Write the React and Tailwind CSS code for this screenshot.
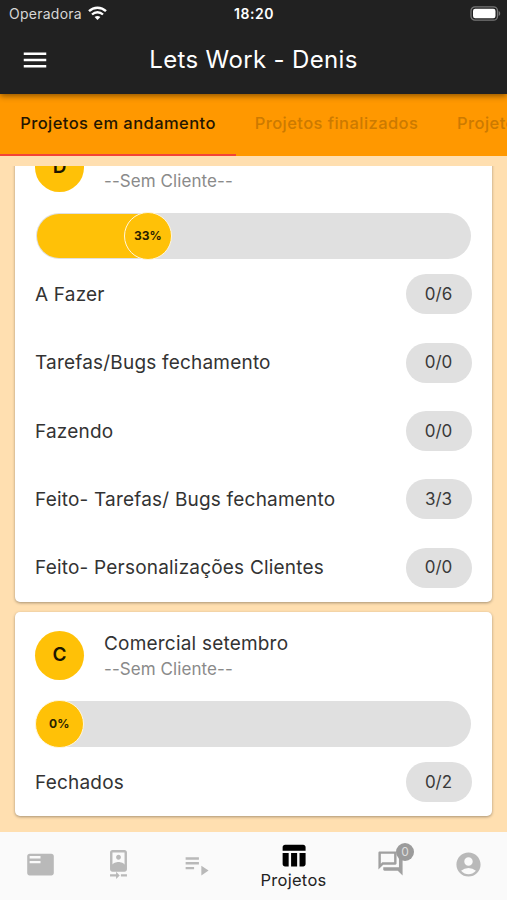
import {
  MdAccountCircle,
  MdCameraFront,
  MdFeaturedPlayList,
  MdMenu,
  MdOutlineQuestionAnswer,
  MdPlaylistPlay,
  MdTableChart,
} from "react-icons/md";

const projects = [
  {
    initial: "D",
    name: "Desenvolvimento",
    client: "--Sem Cliente--",
    percent: 33,
    lists: [
      { name: "A Fazer", count: "0/6" },
      { name: "Tarefas/Bugs fechamento", count: "0/0" },
      { name: "Fazendo", count: "0/0" },
      { name: "Feito- Tarefas/ Bugs fechamento", count: "3/3" },
      { name: "Feito- Personalizações Clientes", count: "0/0" },
    ],
  },
  {
    initial: "C",
    name: "Comercial setembro",
    client: "--Sem Cliente--",
    percent: 0,
    lists: [{ name: "Fechados", count: "0/2" }],
  },
];

function StatusBar() {
  return (
    <div className="grid grid-cols-3 items-center h-[28px] pl-[9px] pr-[6px]">
      <div className="flex items-center gap-[6px] -mt-[1px]">
        <span className="text-[14px] tracking-[0.25px] text-[#d6d6d6]">Operadora</span>
        <svg className="-mt-[1px]" width="19" height="15" viewBox="0 0 19 15" fill="none" stroke="#fff">
          <path d="M1 5.2C5.8.6 13.2.6 18 5.2" strokeWidth="2.4" />
          <path d="M4 8.5c3.2-3 7.8-3 11 0" strokeWidth="2.3" />
          <path d="M6.6 11c1.7-1.5 4.1-1.5 5.8 0l-2.9 3z" fill="#fff" stroke="none" />
        </svg>
      </div>
      <span className="text-center text-[14px] font-semibold tracking-[0.5px] pr-[2px] -mt-[2px]">18:20</span>
      <svg className="justify-self-end -mt-[2px]" width="31" height="15" viewBox="0 0 31 15">
        <rect x="1" y=".8" width="26.5" height="13.4" rx="4" fill="none" stroke="#777" strokeWidth="1.3" />
        <rect x="3" y="2.8" width="22.5" height="9.4" rx="2.2" fill="#fff" />
        <path d="M28.7 5c2 .7 2 4.3 0 5z" fill="#777" />
      </svg>
    </div>
  );
}

function Header() {
  return (
    <header className="relative z-10 shrink-0 h-[94px] bg-[#212121] text-white shadow-[0_2px_6px_rgba(0,0,0,0.45)]">
      <StatusBar />
      <div className="grid grid-cols-[60px_1fr_60px] items-center h-[64px]">
        <button className="pl-[20px]">
          <MdMenu className="size-[30px]" />
        </button>
        <h1 className="text-center text-[24px] leading-none tracking-[0.35px]">Lets Work - Denis</h1>
      </div>
    </header>
  );
}

function Tabs() {
  return (
    <nav className="flex shrink-0 h-[62px] bg-[#ff9800] text-[16.5px] font-medium tracking-[0.44px] whitespace-nowrap overflow-hidden">
      <button className="shrink-0 w-[236px] pb-[1px] border-b-[2.5px] border-[#f44336] text-[#241500]">
        Projetos em andamento
      </button>
      <button className="shrink-0 w-[201px] pb-[3px] text-[#cc7a00]">Projetos finalizados</button>
      <button className="shrink-0 pl-[20px] pb-[3px] text-[#cc7a00]">Projetos arquivados</button>
    </nav>
  );
}

function Progress({ percent }) {
  return (
    <div className="relative h-[46.5px] mx-[1px] rounded-full bg-[#e0e0e0]">
      {percent > 0 && (
        <div
          className="absolute left-[0.5px] inset-y-[1px] rounded-l-full bg-[#ffc107]"
          style={{ width: `calc(${percent}% - 33px)` }}
        />
      )}
      <div
        className="absolute -top-[1px] -ml-[1px] flex items-center justify-center size-[48.5px] rounded-full border-[1.5px] border-[#fff6dc] bg-[#ffc107] text-[12px] font-bold text-[#2b2100]"
        style={{ left: `${percent * 0.617}%` }}
      >
        {percent}%
      </div>
    </div>
  );
}

function ProjectCard({ project }) {
  return (
    <section className="shrink-0 rounded-[5px] bg-white px-[20px] pt-[19px] pb-[14px] shadow-[0_1px_3px_rgba(0,0,0,0.35)]">
      <div className="flex items-center gap-[20px] h-[49px]">
        <div className="flex items-center justify-center size-[49px] rounded-full bg-[#ffc107] text-[19px] font-semibold text-[#1c1600]">
          {project.initial}
        </div>
        <div className="pt-[2px]">
          <p className="text-[19px] leading-[26px] tracking-[0.2px] text-[#333]">{project.name}</p>
          <p className="text-[17px] leading-[24px] tracking-[0.08px] text-[#8a8a8a]">{project.client}</p>
        </div>
      </div>
      <div className="mt-[21px] mb-[15px]">
        <Progress percent={project.percent} />
      </div>
      <ul className="flex flex-col gap-[28.4px]">
        {project.lists.map((list) => (
          <li key={list.name} className="flex items-center justify-between h-[40px]">
            <span className="pt-[2px] text-[19px] tracking-[0.2px] text-[#333]">{list.name}</span>
            <span className="flex items-center justify-center w-[66px] h-[40px] pt-[1px] mr-[0.5px] rounded-full bg-[#e0e0e0] text-[17px] text-[#3a3a3a]">
              {list.count}
            </span>
          </li>
        ))}
      </ul>
    </section>
  );
}

function BottomNav() {
  return (
    <nav className="flex shrink-0 items-center h-[68.5px] bg-[#fafafa] text-[#b9b9b9]">
      <button className="flex justify-center w-[80px] pb-[3px]">
        <MdFeaturedPlayList className="size-[29px]" />
      </button>
      <button className="flex justify-center w-[77px] pb-[3px]">
        <MdCameraFront className="size-[29px]" />
      </button>
      <button className="flex justify-center w-[78px] pb-[3px]">
        <MdPlaylistPlay className="size-[29px]" />
      </button>
      <button className="flex flex-col items-center w-[117px] text-black">
        <MdTableChart className="size-[29px]" />
        <span className="text-[16.5px] leading-[20px] tracking-[0.3px] text-[#222]">Projetos</span>
      </button>
      <button className="relative flex justify-center w-[77px] pb-[4px] text-[#a0a0a0]">
        <MdOutlineQuestionAnswer className="size-[29px]" />
        <span className="absolute -top-[6px] left-[44px] flex items-center justify-center size-[18px] rounded-full bg-[#9b9b9b] text-[12px] text-[#dedede]">
          0
        </span>
      </button>
      <button className="flex justify-center w-[78px] pb-[3px]">
        <MdAccountCircle className="size-[29px]" />
      </button>
    </nav>
  );
}

export default function App() {
  return (
    <div className="flex flex-col w-[507px] h-[900px] overflow-hidden bg-[#ffdfb0] font-['Inter',sans-serif]">
      <Header />
      <Tabs />
      {/* list is scrolled down, so the first card is anchored by the end */}
      <main className="flex flex-col justify-end gap-[10px] flex-1 min-h-0 mt-[10px] px-[15px] pb-[15.3px] overflow-hidden">
        {projects.map((project) => (
          <ProjectCard key={project.initial} project={project} />
        ))}
      </main>
      <BottomNav />
    </div>
  );
}
